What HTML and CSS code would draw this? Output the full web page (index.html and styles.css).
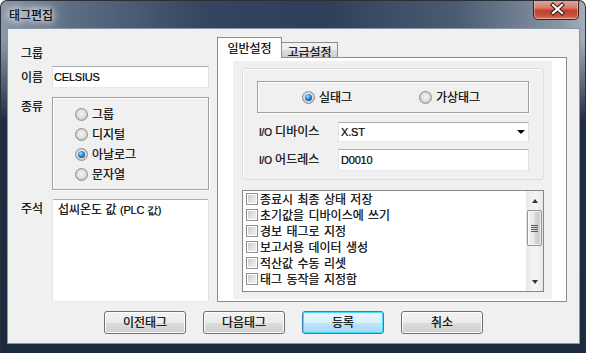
FILE: index.html
```html
<!DOCTYPE html>
<html lang="ko">
<head>
<meta charset="utf-8">
<link rel="stylesheet" href="styles.css">
</head>
<body>
<div class="window">
  <div class="titlebar">
    <span class="title">태그편집</span>
    <div class="close">
      <svg width="46" height="20" viewBox="0 0 46 20">
        <path d="M19 6 L28 14 M28 6 L19 14" stroke="#3a1a16" stroke-width="4.2" stroke-linecap="square" fill="none"/>
        <path d="M19 6 L28 14 M28 6 L19 14" stroke="#ffffff" stroke-width="2.2" stroke-linecap="square" fill="none"/>
      </svg>
    </div>
  </div>
  <div class="client">
    <div class="main">
      <div class="left">
        <div class="row r-group"><span class="lbl">그룹</span></div>
        <div class="row r-name"><span class="lbl">이름</span><div class="field input"><span class="lat">CELSIUS</span></div></div>
        <div class="row r-kind top"><span class="lbl">종류</span>
          <div class="field etched kind">
            <div class="opt"><span class="radio"></span><span>그룹</span></div>
            <div class="opt"><span class="radio"></span><span>디지털</span></div>
            <div class="opt"><span class="radio on"></span><span>아날로그</span></div>
            <div class="opt"><span class="radio"></span><span>문자열</span></div>
          </div>
        </div>
        <div class="row r-note top"><span class="lbl">주석</span>
          <div class="field textarea">섭씨온도 값 <span class="lat">(PLC 값)</span></div>
        </div>
      </div>
      <div class="tabs">
        <div class="tabstrip">
          <div class="tab active">일반설정</div>
          <div class="tab">고급설정</div>
        </div>
        <div class="page">
          <div class="inner">
            <div class="groupbox">
              <div class="etched tagtype">
                <div class="opt o1"><span class="radio on"></span><span>실태그</span></div>
                <div class="opt"><span class="radio"></span><span>가상태그</span></div>
              </div>
              <div class="iorow r1">
                <span class="iolbl"><span class="lat io">I/O</span> 디바이스</span>
                <div class="combo"><span class="lat">X.ST</span><span class="arrow"></span></div>
              </div>
              <div class="iorow r2">
                <span class="iolbl"><span class="lat io">I/O</span> 어드레스</span>
                <div class="input addr"><span class="lat">D0010</span></div>
              </div>
            </div>
            <div class="list">
              <div class="items">
                <div class="item"><span class="chk"></span>종료시 최종 상태 저장</div>
                <div class="item"><span class="chk"></span>초기값을 디바이스에 쓰기</div>
                <div class="item"><span class="chk"></span>경보 태그로 지정</div>
                <div class="item"><span class="chk"></span>보고서용 데이터 생성</div>
                <div class="item"><span class="chk"></span>적산값 수동 리셋</div>
                <div class="item"><span class="chk"></span>태그 동작을 지정함</div>
              </div>
              <div class="scrollbar">
                <span class="sarrow up"></span>
                <div class="thumb"><span class="grip"></span></div>
                <span class="sarrow down"></span>
              </div>
            </div>
          </div>
        </div>
      </div>
    </div>
    <div class="buttons">
      <div class="btn">이전태그</div>
      <div class="btn">다음태그</div>
      <div class="btn focus">등록</div>
      <div class="btn">취소</div>
    </div>
  </div>
</div>
</body>
</html>
```

FILE: styles.css
```css
* { box-sizing: border-box; }
html, body { margin: 0; padding: 0; }
body {
  width: 590px; height: 353px; overflow: hidden;
  background: #ffffff;
  font-family: "Noto Sans CJK KR", "Noto Sans", sans-serif;
  font-size: 12px; line-height: 16px; color: #000;
  -webkit-text-stroke: 0.2px #000;
}
.window {
  width: 586px; height: 353px;
  border-radius: 7px 7px 0 0;
  border: 1px solid #2a2f38;
  border-bottom: none;
  background:
    linear-gradient(to bottom, rgba(0,0,0,0) 0, rgba(0,0,0,0) 40px, #1f2d44 120px, #1c2a40 100%),
    linear-gradient(to right, #8c99aa 0%, #5d6d84 12%, #34465f 35%, #2e4059 55%, #4b5b72 78%, #8a96a6 96%, #a4aeba 100%);
  display: flex; flex-direction: column;
  overflow: hidden;
}
.titlebar {
  height: 28px; flex: none;
  display: flex; justify-content: space-between; align-items: flex-start;
  padding-left: 8px;
}
.title {
  margin-top: 6px;
  font-size: 12px; line-height: 16px; color: #000;
  text-shadow: 0 0 6px #fff, 0 0 8px #fff, 0 0 10px #e8eef5;
}
.close {
  width: 46px; height: 20px; margin-right: 6px; margin-top: -1px;
  border: 1px solid #4a1c18; border-top: none;
  border-radius: 0 0 5px 5px;
  background: linear-gradient(to bottom, #e8a796 0%, #d5806c 40%, #c0422d 55%, #c8543c 85%, #d9866e 100%);
  box-shadow: inset 0 0 0 1px rgba(255,220,210,0.45);
}
.close svg { display: block; margin-top: -1px; }
.client {
  margin: 0 6px 0 7px;
  height: 314px; flex: none;
  background: #f0f0f0;
  box-shadow: 0 0 0 1px #8796a8;
  display: flex; flex-direction: column;
}
.main { height: 273px; padding-top: 8px; display: flex; }
.left { margin-left: 13px; width: 188px; padding-top: 5px; display: flex; flex-direction: column; }
.row { display: flex; align-items: center; }
.row.top { align-items: flex-start; }
.lbl { width: 31px; flex: none; line-height: 16px; }
.row.top .lbl { margin-top: 1px; }
.r-group { height: 22px; }
.r-name { height: 22px; margin-top: 2px; }
.r-kind { height: 93px; margin-top: 9px; }
.r-note { height: 103px; margin-top: 9px; }
.field { flex: 1; height: 100%; }
.lat { font-family: "Liberation Sans", Arial, sans-serif; font-size: 11px; letter-spacing: -0.2px; }
.input {
  background: #fff;
  border: 1px solid; border-color: #abadb3 #dbdfe6 #e3e9ef #e2e3ea;
  padding-left: 1px; display: flex; align-items: center;
}
.etched {
  border: 1px solid #a0a0a0;
  box-shadow: 1px 1px 0 #ffffff, inset 1px 1px 0 #ffffff;
}
.kind { padding: 6px 0 0 22px; }
.opt { display: flex; align-items: center; height: 20px; gap: 4px; }
.radio {
  width: 13px; height: 13px; border-radius: 50%; flex: none;
  border: 1px solid #8c8e91;
  background: radial-gradient(circle at 50% 45%, #f4f4f4 0, #e2e2e2 45%, #bcbcbc 80%, #d8d8d8 100%);
  position: relative;
}
.radio.on::after {
  content: ""; position: absolute; left: 2px; top: 2px; width: 7px; height: 7px; border-radius: 50%;
  background: radial-gradient(circle at 40% 35%, #a8dcff 0, #3b8fd8 40%, #145597 75%, #0c3868 100%);
}
.textarea {
  background: #fff;
  border: 1px solid; border-color: #abadb3 #dbdfe6 #e3e9ef #e2e3ea;
  border-radius: 2px;
  padding: 1px 0 0 5px;
}
.tabs { margin-left: 8px; width: 350px; display: flex; flex-direction: column; }
.tabstrip { height: 20px; display: flex; align-items: flex-end; flex: none; }
.tab {
  border: 1px solid #898c95; border-bottom: none;
  text-align: center;
}
.tab.active {
  width: 65px; height: 21px; margin-bottom: -1px;
  background: #fff; position: relative; z-index: 1;
  line-height: 19px;
}
.tab:not(.active) {
  width: 56px; height: 15px; border-left: none;
  background: linear-gradient(to bottom, #f2f2f2 0%, #ebebeb 50%, #dddddd 51%, #cfcfcf 100%);
  line-height: 16px; padding-top: 1px;
}
.page {
  flex: 1;
  border: 1px solid #898c95; background: #fff;
  padding: 3px 14px 2px 15px;
}
.inner {
  height: 100%; background: #f0f0f0;
  padding: 7px 8px 0 9px;
}
.groupbox {
  height: 112px;
  border: 1px solid #d5dfe5; border-radius: 3px;
  box-shadow: inset 1px 1px 0 #fff;
  padding: 12px 14px 0 14px;
}
.tagtype { height: 32px; display: flex; align-items: center; padding-left: 44px; }
.tagtype .o1 { width: 117px; }
.iorow { display: flex; align-items: center; }
.iorow.r1 { margin-top: 9px; height: 20px; }
.iorow.r2 { margin-top: 7px; height: 22px; }
.iolbl { width: 81px; padding-left: 2px; flex: none; }
.io { font-size: 10px; }
.combo {
  flex: 1; height: 100%; background: #fff;
  border: 1px solid; border-color: #abadb3 #dbdfe6 #e3e9ef #e2e3ea;
  display: flex; align-items: center; justify-content: space-between;
  padding: 0 3px 0 2px;
}
.arrow {
  width: 0; height: 0;
  border-left: 4px solid transparent; border-right: 4px solid transparent;
  border-top: 4px solid #000;
}
.input.addr { flex: 1; height: 100%; align-items: flex-start; padding: 2px 0 0 2px; }
.list {
  margin-top: 10px; height: 102px;
  border: 1px solid #828790; background: #fff;
  display: flex;
}
.items { flex: 1; padding: 0 0 0 3px; word-spacing: 1px; }
.item { height: 16px; line-height: 16px; display: flex; align-items: center; }
.chk {
  width: 12px; height: 12px; flex: none; margin-right: 2px;
  border: 1px solid #8f8f8f; background: #fff;
  position: relative;
}
.chk::after {
  content: ""; position: absolute; left: 1px; top: 1px; right: 1px; bottom: 1px;
  background: linear-gradient(135deg, #c9ccd1 0%, #e3e4e6 60%, #f3f3f3 100%);
}
.scrollbar {
  width: 17px; flex: none; height: 100%;
  background: linear-gradient(to right, #e6e6e6, #f3f3f3 40%, #f3f3f3 60%, #e8e8e8);
  display: flex; flex-direction: column; align-items: center;
  padding-top: 8px;
}
.sarrow { width: 0; height: 0; border-left: 3.5px solid transparent; border-right: 3.5px solid transparent; }
.sarrow.up { border-bottom: 4px solid #333; }
.sarrow.down { border-top: 4px solid #333; margin-top: 34px; }
.thumb {
  margin-top: 7px; width: 15px; height: 36px;
  border: 1px solid #959595; border-radius: 2px;
  background: linear-gradient(to right, #f2f2f2 0%, #e9e9e9 45%, #d6d6d6 55%, #cbcbcb 100%);
  box-shadow: inset 0 0 0 1px rgba(255,255,255,0.7);
  display: flex; align-items: center; justify-content: center;
}
.grip {
  width: 7px; height: 7px;
  background: repeating-linear-gradient(to bottom, #5a5a5a 0, #5a5a5a 1px, transparent 1px, transparent 2px);
}
.buttons { margin-top: 9px; height: 23px; display: flex; justify-content: center; gap: 17px; }
.btn {
  width: 82px; height: 23px;
  border: 1px solid #707070; border-radius: 3px;
  background: linear-gradient(to bottom, #f2f2f2 0%, #ebebeb 50%, #dddddd 51%, #cfcfcf 100%);
  box-shadow: inset 0 0 0 1px #fcfcfc;
  text-align: center; line-height: 20px;
}
.btn.focus {
  border-color: #3c7fb1;
  background: linear-gradient(to bottom, #eaf6fd 0%, #d9f0fc 50%, #bee6fd 51%, #a7d9f5 100%);
  box-shadow: inset 0 0 0 1px #48d8fb;
}
```
